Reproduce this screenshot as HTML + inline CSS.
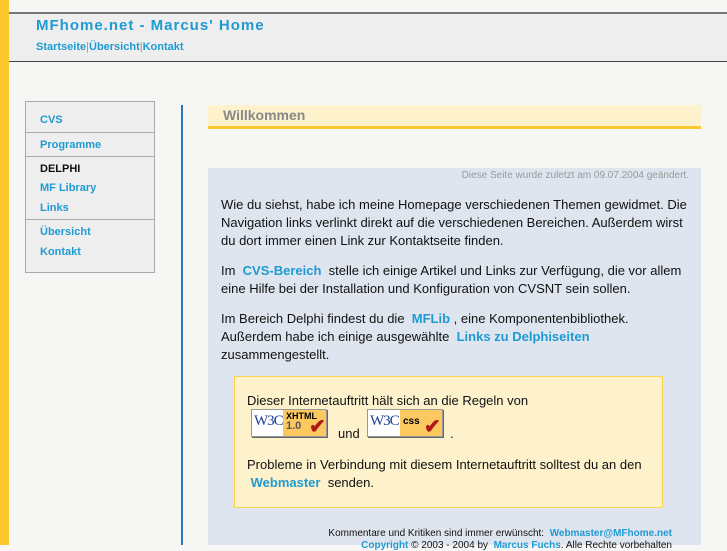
<!DOCTYPE html>
<html><head><meta charset="utf-8"><style>
body{margin:0;width:727px;height:545px;overflow:hidden;background:#f6f6f4;font-family:"Liberation Sans",sans-serif;position:relative}
.a{position:absolute}
.bl{color:#1f9ad2;font-weight:bold;text-decoration:none}
p{margin:0}
</style></head><body>
<div class="a" style="left:0;top:0;width:9px;height:545px;background:#fcc72c"></div>
<div class="a" style="left:9px;top:12px;width:718px;height:47px;background:#eeeeee;border-top:2px solid #777;border-bottom:1px solid #444"></div>
<div class="a bl" style="left:36px;top:17px;font-size:15px;letter-spacing:1px">MFhome.net - Marcus' Home</div>
<div class="a bl" style="left:36px;top:41px;font-size:11px;color:#1f9ad2">Startseite<span style="color:#999;font-weight:normal">|</span>Übersicht<span style="color:#999;font-weight:normal">|</span>Kontakt</div>

<div class="a" style="left:25px;top:101px;width:128px;height:170px;background:#eeeeee;border:1px solid #aaa"></div>
<div class="a" style="left:26px;top:132px;width:128px;height:1px;background:#aaa"></div>
<div class="a" style="left:26px;top:156px;width:128px;height:1px;background:#aaa"></div>
<div class="a" style="left:26px;top:219px;width:128px;height:1px;background:#aaa"></div>
<div class="a bl" style="left:40px;top:114px;font-size:11px">CVS</div>
<div class="a bl" style="left:40px;top:139px;font-size:11px">Programme</div>
<div class="a" style="left:40px;top:163px;font-size:11px;font-weight:bold;color:#111">DELPHI</div>
<div class="a bl" style="left:40px;top:182px;font-size:11px">MF Library</div>
<div class="a bl" style="left:40px;top:202px;font-size:11px">Links</div>
<div class="a bl" style="left:40px;top:226px;font-size:11px">Übersicht</div>
<div class="a bl" style="left:40px;top:246px;font-size:11px">Kontakt</div>

<div class="a" style="left:181px;top:105px;width:2px;height:440px;background:#2d78b4"></div>

<div class="a" style="left:208px;top:105px;width:493px;height:21px;background:#fdf2cc;border-bottom:3px solid #fcc72c"></div>
<div class="a" style="left:223px;top:107px;font-size:14px;font-weight:bold;color:#888">Willkommen</div>

<div class="a" style="left:208px;top:168px;width:493px;height:377px;background:#dfe5ef"></div>
<div class="a" style="left:208px;top:170px;width:481px;text-align:right;font-size:10px;color:#999">Diese Seite wurde zuletzt am 09.07.2004 geändert.</div>
<div class="a" style="left:221px;top:196px;width:472px;font-size:13px;line-height:18px;color:#111">
<p>Wie du siehst, habe ich meine Homepage verschiedenen Themen gewidmet. Die Navigation links verlinkt direkt auf die verschiedenen Bereichen. Außerdem wirst du dort immer einen Link zur Kontaktseite finden.</p>
<p style="margin-top:12px">Im &nbsp;<span class="bl">CVS-Bereich</span>&nbsp; stelle ich einige Artikel und Links zur Verfügung, die vor allem eine Hilfe bei der Installation und Konfiguration von CVSNT sein sollen.</p>
<p style="margin-top:12px">Im Bereich Delphi findest du die &nbsp;<span class="bl">MFLib</span> , eine Komponentenbibliothek.<br>Außerdem habe ich einige ausgewählte &nbsp;<span class="bl">Links zu Delphiseiten</span><br>zusammengestellt.</p>
</div>

<div class="a" style="left:234px;top:376px;width:427px;height:130px;background:#fdf2cc;border:1px solid #fcd34a"></div>
<div class="a" style="left:247px;top:393px;font-size:13px;color:#111">Dieser Internetauftritt hält sich an die Regeln von</div>
<div class="a" style="left:251px;top:409px;width:74px;height:26px;background:#fff;border:1px solid #999;box-shadow:1px 1px 0 #666"></div>
<div class="a" style="left:283px;top:410px;width:43px;height:26px;background:#fcc860"></div>
<div class="a" style="left:254px;top:413px;font-size:15px;color:#1c3f94;font-family:'Liberation Serif',serif;letter-spacing:-1px">W3C</div>
<div class="a" style="left:286px;top:411px;font-size:9px;font-weight:bold;color:#000;line-height:10px">XHTML<br><span style="font-size:11px;color:#555">1.0</span></div>
<div class="a" style="left:309px;top:414px;font-size:20px;color:#b01818;font-weight:bold">✔</div>
<div class="a" style="left:338px;top:426px;font-size:13px;color:#111">und</div>
<div class="a" style="left:367px;top:409px;width:74px;height:26px;background:#fff;border:1px solid #999;box-shadow:1px 1px 0 #666"></div>
<div class="a" style="left:400px;top:410px;width:42px;height:26px;background:#fcc860"></div>
<div class="a" style="left:370px;top:413px;font-size:15px;color:#1c3f94;font-family:'Liberation Serif',serif;letter-spacing:-1px">W3C</div>
<div class="a" style="left:403px;top:416px;font-size:10px;font-weight:bold;color:#000">css</div>
<div class="a" style="left:424px;top:414px;font-size:20px;color:#b01818;font-weight:bold">✔</div>
<div class="a" style="left:450px;top:426px;font-size:13px;color:#111">.</div>
<div class="a" style="left:247px;top:456px;font-size:13px;line-height:18px;color:#111">Probleme in Verbindung mit diesem Internetauftritt solltest du an den<br>&nbsp;<span class="bl">Webmaster</span>&nbsp; senden.</div>

<div class="a" style="left:200px;top:528px;width:472px;text-align:right;font-size:10px;color:#111">Kommentare und Kritiken sind immer erwünscht: &nbsp;<span class="bl">Webmaster@MFhome.net</span></div>
<div class="a" style="left:200px;top:540px;width:472px;text-align:right;font-size:10px;color:#111"><span class="bl">Copyright</span> © 2003 - 2004 by &nbsp;<span class="bl">Marcus Fuchs</span>. Alle Rechte vorbehalten</div>
</body></html>
